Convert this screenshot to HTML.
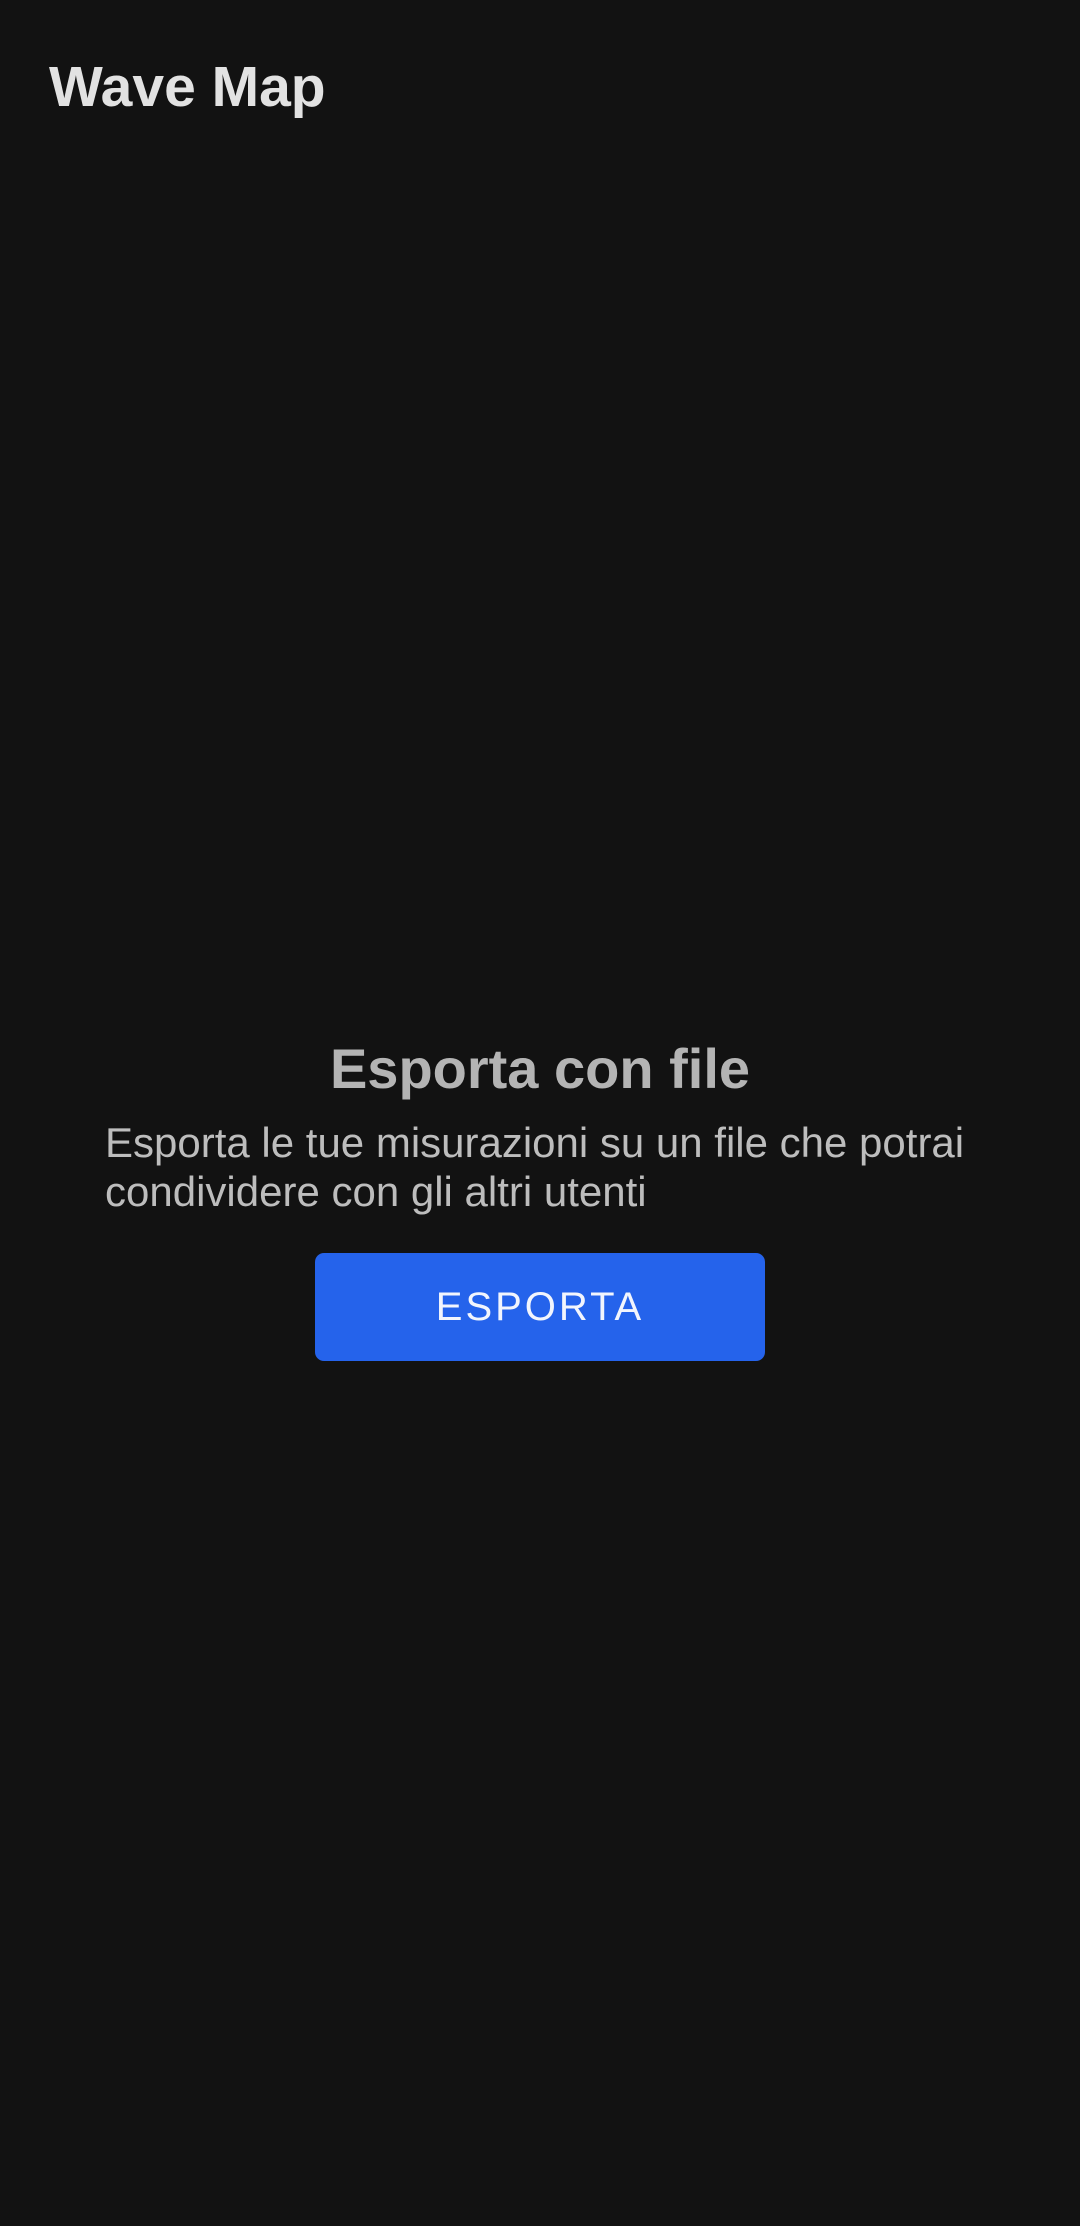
<!DOCTYPE html>
<html><head><meta charset="utf-8"><style>
html,body{margin:0;padding:0;background:#121212;width:1080px;height:2226px;overflow:hidden;font-family:"Liberation Sans",sans-serif;}
.t{position:absolute;left:49px;top:52px;font-size:57px;font-weight:bold;color:#e2e2e2;line-height:70px;white-space:nowrap;}
.h{position:absolute;left:0;width:1080px;text-align:center;top:1036px;font-size:56px;font-weight:bold;color:#b4b4b4;line-height:66px;}
.p{position:absolute;left:105px;top:1118px;font-size:42px;color:#bdbdbd;line-height:49px;white-space:nowrap;}
.b{position:absolute;left:315px;top:1253px;width:450px;height:108px;background:#2563eb;border-radius:9px;color:#f2f5fd;font-size:40px;letter-spacing:3px;text-align:center;line-height:108px;}
</style></head><body>
<div class="t">Wave Map</div>
<div class="h">Esporta con file</div>
<div class="p">Esporta le tue misurazioni su un file che potrai<br>condividere con gli altri utenti</div>
<div class="b">ESPORTA</div>
</body></html>
